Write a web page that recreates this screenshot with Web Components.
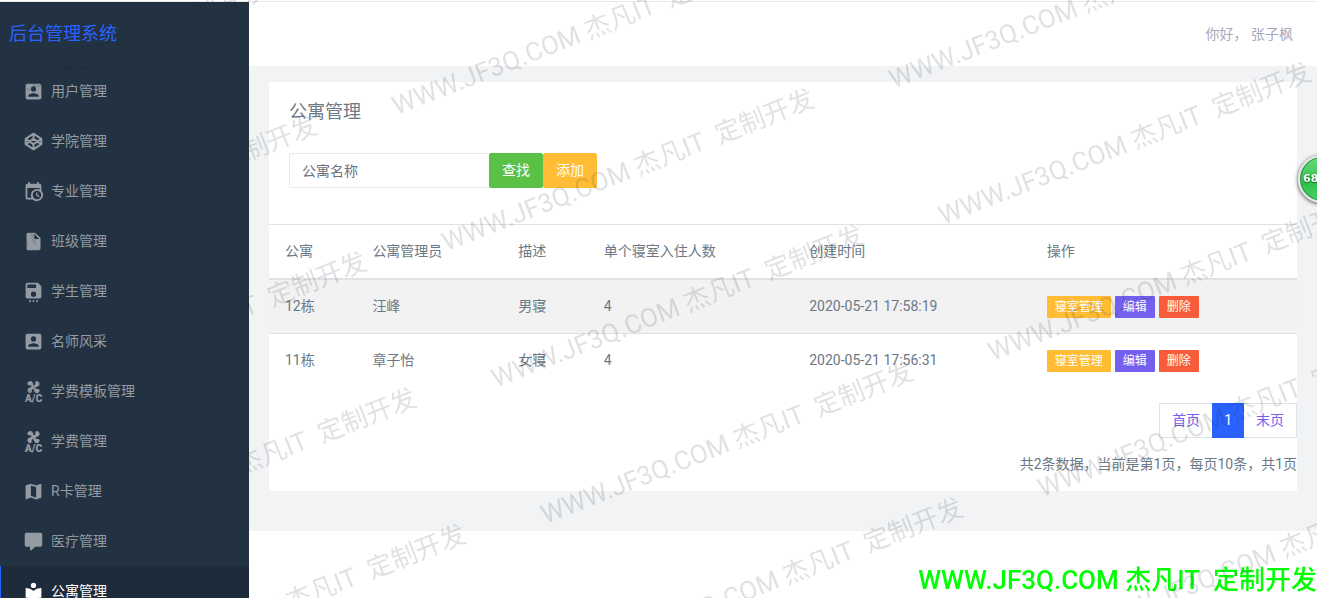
<!DOCTYPE html>
<html lang="zh-CN">
<head>
<meta charset="utf-8">
<meta name="viewport" content="width=device-width, initial-scale=1">
<title>后台管理系统</title>
<style>
  body {
    margin: 0;
    font-family: Roboto, "Noto Sans CJK SC", sans-serif;
    font-size: 14px;
    line-height: 21px;
    color: #6b7886;
    background: #fff;
  }
</style>
</head>
<body>
<admin-shell>
  <side-nav slot="side" brand="后台管理系统">
    <nav-item icon="account">用户管理</nav-item>
    <nav-item icon="codepen">学院管理</nav-item>
    <nav-item icon="calendar">专业管理</nav-item>
    <nav-item icon="file">班级管理</nav-item>
    <nav-item icon="save">学生管理</nav-item>
    <nav-item icon="account">名师风采</nav-item>
    <nav-item icon="fan">学费模板管理</nav-item>
    <nav-item icon="fan">学费管理</nav-item>
    <nav-item icon="map">R卡管理</nav-item>
    <nav-item icon="comment">医疗管理</nav-item>
    <nav-item icon="reader" active>公寓管理</nav-item>
  </side-nav>
  <top-bar slot="top">你好， 张子枫</top-bar>
  <panel-card>
    <span slot="title">公寓管理</span>
    <search-form slot="tools" placeholder="公寓名称"></search-form>
    <room-table></room-table>
    <page-nav slot="footer">共2条数据，当前是第1页，每页10条，共1页</page-nav>
  </panel-card>
</admin-shell>
<site-stamp>WWW.JF3Q.COM 杰凡IT&nbsp; 定制开发</site-stamp>
<speed-ball>68</speed-ball>
<water-mark text="WWW.JF3Q.COM 杰凡IT&nbsp; 定制开发"></water-mark>

<script>
const ICONS = {
  account: '<path d="M6,17C6,15 10,13.9 12,13.9C14,13.9 18,15 18,17V18H6M15,9A3,3 0 0,1 12,12A3,3 0 0,1 9,9A3,3 0 0,1 12,6A3,3 0 0,1 15,9M3,5V19A2,2 0 0,0 5,21H19A2,2 0 0,0 21,19V5A2,2 0 0,0 19,3H5C3.89,3 3,3.9 3,5Z"/>',
  codepen: '<path fill="none" stroke="currentColor" stroke-width="2.2" stroke-linejoin="round" d="M12,3L21,9V15L12,21L3,15V9ZM3,9L12,15L21,9M3,15L12,9L21,15M12,3V9M12,15V21"/>',
  calendar: '<path d="M15,13H16.5V15.82L18.94,17.23L18.19,18.53L15,16.69V13M19,8H5V19H9.67C9.24,18.09 9,17.07 9,16A7,7 0 0,1 16,9C17.07,9 18.09,9.24 19,9.67V8M5,21C3.89,21 3,20.1 3,19V5C3,3.89 3.89,3 5,3H6V1H8V3H16V1H18V3H19A2,2 0 0,1 21,5V11.1C22.24,12.36 23,14.09 23,16A7,7 0 0,1 16,23C14.09,23 12.36,22.24 11.1,21H5M16,11.15A4.85,4.85 0 0,0 11.15,16C11.15,18.68 13.32,20.85 16,20.85A4.85,4.85 0 0,0 20.85,16C20.85,13.32 18.68,11.15 16,11.15Z"/>',
  file: '<path d="M13,9V3.5L18.5,9M6,2C4.89,2 4,2.89 4,4V20A2,2 0 0,0 6,22H18A2,2 0 0,0 20,20V8L14,2H6Z"/>',
  save: '<path d="M15,8V4H5V8H15M12,18A3,3 0 0,0 15,15A3,3 0 0,0 12,12A3,3 0 0,0 9,15A3,3 0 0,0 12,18M17,2L21,6V18A2,2 0 0,1 19,20H5C3.89,20 3,19.1 3,18V4A2,2 0 0,1 5,2H17M11,22H13V24H11V22M7,22H9V24H7V22M15,22H17V24H15V22Z"/>',
  fan: '<path d="M6.59,0.66C8.93,-1.15 11.47,1.06 12.04,4.5C12.47,4.5 12.89,4.62 13.27,4.84C13.79,4.24 14.25,3.42 14.07,2.5C13.65,0.35 16.06,-1.39 18.35,1.58C20.16,3.92 17.95,6.46 14.5,7.03C14.5,7.46 14.39,7.89 14.16,8.27C14.76,8.78 15.58,9.24 16.5,9.06C18.63,8.64 20.38,11.04 17.41,13.34C15.07,15.15 12.53,12.94 11.96,9.5C11.53,9.5 11.11,9.37 10.74,9.15C10.22,9.75 9.75,10.58 9.93,11.5C10.35,13.64 7.94,15.39 5.65,12.42C3.83,10.07 6.05,7.53 9.5,6.97C9.5,6.54 9.63,6.12 9.85,5.74C9.25,5.23 8.43,4.76 7.5,4.94C5.37,5.36 3.62,2.96 6.59,0.66Z"/><text x="12" y="24" text-anchor="middle" font-family="Roboto, sans-serif" font-weight="900" font-size="12">A/C</text>',
  map: '<path d="M15,19L9,16.89V5L15,7.11M20.5,3C20.44,3 20.39,3 20.34,3L15,5.1L9,3L3.36,4.9C3.15,4.97 3,5.15 3,5.38V20.5A0.5,0.5 0 0,0 3.5,21C3.55,21 3.61,21 3.66,20.97L9,18.9L15,21L20.64,19.1C20.85,19 21,18.85 21,18.62V3.5A0.5,0.5 0 0,0 20.5,3Z"/>',
  comment: '<path d="M9,22A1,1 0 0,1 8,21V18H4A2,2 0 0,1 2,16V4C2,2.89 2.9,2 4,2H20A2,2 0 0,1 22,4V16A2,2 0 0,1 20,18H13.9L10.2,21.71C10,21.9 9.75,22 9.5,22H9Z"/>',
  reader: '<path d="M12,8A3,3 0 0,0 15,5A3,3 0 0,0 12,2A3,3 0 0,0 9,5A3,3 0 0,0 12,8M12,11.54C9.64,9.35 6.5,8 3,8V19C6.5,19 9.64,20.35 12,22.54C14.36,20.35 17.5,19 21,19V8C17.5,8 14.36,9.35 12,11.54Z"/>'
};

const ROOMS = [
  { name: '12栋', manager: '汪峰', desc: '男寝', size: 4, created: '2020-05-21 17:58:19' },
  { name: '11栋', manager: '章子怡', desc: '女寝', size: 4, created: '2020-05-21 17:56:31' }
];

/** Base: renders template() into an open shadow root. */
class BaseElement extends HTMLElement {
  constructor() {
    super();
    this.attachShadow({ mode: 'open' });
    const tpl = document.createElement('template');
    tpl.innerHTML = this.template();
    this.shadowRoot.appendChild(tpl.content.cloneNode(true));
  }
}

class AdminShell extends BaseElement {
  template() {
    return `
      <style>
        :host {
          display: grid;
          grid-template-columns: 249px minmax(0, 1fr);
          box-sizing: border-box;
          height: 100vh;
          overflow: hidden;
          padding-top: 2px;
          background: linear-gradient(#fff 1px, #e6e8ea 1px, #e6e8ea 2px, #fff 2px);
        }
        main { background: #f2f3f5; padding: 16px 20px 40px; }
      </style>
      <slot name="side"></slot>
      <div>
        <slot name="top"></slot>
        <main><slot></slot></main>
      </div>`;
  }
}

class SideNav extends BaseElement {
  template() {
    return `
      <style>
        :host { display: block; background: #233242; overflow: hidden; }
        .brand {
          display: flex;
          align-items: center;
          box-sizing: border-box;
          height: 64px;
          padding: 0 0 2px 9px;
          font-size: 18px;
          color: #2962ff;
          text-decoration: none;
          box-shadow: 0 1px 4px rgba(0,0,0,0.12);
        }
      </style>
      <a class="brand" href="#">${this.getAttribute('brand')}</a>
      <nav><slot></slot></nav>`;
  }
}

class NavItem extends BaseElement {
  template() {
    return `
      <style>
        :host { display: block; }
        a {
          display: flex;
          align-items: center;
          gap: 7px;
          height: 50px;
          padding-left: 23px;
          color: #949ba3;
          text-decoration: none;
        }
        svg { width: 21px; height: 21px; fill: currentColor; overflow: visible; }
        :host([active]) a {
          color: #fff;
          background: #1e2b3a;
          box-shadow: inset 1px 0 #2962ff;
        }
      </style>
      <a href="#">
        <svg viewBox="0 0 24 24" aria-hidden="true">${ICONS[this.getAttribute('icon')]}</svg>
        <span><slot></slot></span>
      </a>`;
  }
}

class TopBar extends BaseElement {
  template() {
    return `
      <style>
        :host {
          display: flex;
          align-items: center;
          justify-content: flex-end;
          height: 64px;
          padding: 0 24px;
          background: #fff;
        }
        a { color: #a6aab8; text-decoration: none; }
      </style>
      <a href="#"><slot></slot></a>`;
  }
}

class PanelCard extends BaseElement {
  template() {
    return `
      <style>
        :host { display: block; background: #fff; }
        .head { padding: 16px 20px 36px; }
        h4 {
          margin: 0 0 28px;
          font-size: 18px;
          line-height: 27px;
          font-weight: 400;
        }
      </style>
      <div class="head">
        <h4><slot name="title"></slot></h4>
        <slot name="tools"></slot>
      </div>
      <slot></slot>
      <slot name="footer"></slot>`;
  }
}

class SearchForm extends BaseElement {
  template() {
    const hint = this.getAttribute('placeholder');
    return `
      <style>
        :host { display: block; }
        form { display: flex; }
        input, button { font: inherit; box-sizing: border-box; height: 35px; padding: 0 12px; }
        input {
          width: 200px;
          border: 1px solid #e9ecef;
          border-right: 0;
          outline: 0;
          color: #4f5467;
        }
        input::placeholder { color: #6a7380; opacity: 1; }
        button { width: 54px; border: 1px solid; border-radius: 2px; color: #fff; }
        .find { background: #5ac146; border-color: #5ac146; }
        .add { background: #ffbc34; border-color: #ffbc34; }
      </style>
      <form>
        <input type="text" name="name" aria-label="${hint}" placeholder="${hint}">
        <button class="find" type="button">查找</button>
        <button class="add" type="button">添加</button>
      </form>`;
  }
}

class RoomTable extends BaseElement {
  template() {
    const rows = ROOMS.map(r => `
      <tr>
        <td>${r.name}</td><td>${r.manager}</td><td>${r.desc}</td><td>${r.size}</td><td>${r.created}</td>
        <td>
          <div class="ops">
            <button class="warning" type="button">寝室管理</button>
            <button class="primary" type="button">编辑</button>
            <button class="danger" type="button">删除</button>
          </div>
        </td>
      </tr>`).join('');
    return `
      <style>
        :host { display: block; }
        table { width: 100%; table-layout: fixed; border-spacing: 0; }
        th, td {
          padding: 16px;
          border-top: 1px solid #dee2e6;
          text-align: left;
          font-weight: 400;
          white-space: nowrap;
        }
        th { border-bottom: 2px solid #dee2e6; }
        tbody tr:first-child td { border-top: 0; }
        tbody tr:nth-child(odd) { background: #f2f2f2; }
        .ops { display: flex; gap: 4px; align-items: center; height: 21px; }
        button {
          height: 22px;
          padding: 0 8px;
          border: 0;
          border-radius: 1px;
          font: inherit;
          font-size: 12px;
          line-height: 22px;
          color: #fff;
        }
        .warning { background: #ffbc34; }
        .primary { background: #7460ee; }
        .danger { background: #f95c3a; }
      </style>
      <table>
        <colgroup>
          <col style="width: 8.5%"><col style="width: 14.2%"><col style="width: 8.3%">
          <col style="width: 20%"><col style="width: 23.1%"><col>
        </colgroup>
        <thead>
          <tr><th>公寓</th><th>公寓管理员</th><th>描述</th><th>单个寝室入住人数</th><th>创建时间</th><th>操作</th></tr>
        </thead>
        <tbody>${rows}</tbody>
      </table>`;
  }
}

class PageNav extends BaseElement {
  template() {
    return `
      <style>
        :host {
          display: flex;
          flex-direction: column;
          align-items: flex-end;
          gap: 16px;
          padding: 16px 0;
        }
        nav { display: flex; }
        a {
          padding: 6px 12px;
          border: 1px solid #dee2e6;
          color: #7460ee;
          text-decoration: none;
        }
        a:first-child { border-right: 0; }
        a:last-child { border-left: 0; }
        a.on {
          border-width: 1px 0;
          border-color: #2962ff;
          background: #2962ff;
          color: #fff;
        }
        p { margin: 0; }
      </style>
      <nav aria-label="分页">
        <a href="#">首页</a>
        <a href="#" class="on" aria-current="page">1</a>
        <a href="#">末页</a>
      </nav>
      <p><slot></slot></p>`;
  }
}

/** Fixed text in the lower right corner. */
class SiteStamp extends BaseElement {
  template() {
    return `
      <style>
        :host {
          position: fixed;
          right: 0;
          bottom: 0;
          font: 500 26px/36px Roboto, "Noto Sans CJK SC", sans-serif;
          color: #0f0;
          white-space: nowrap;
        }
      </style>
      <slot></slot>`;
  }
}

class SpeedBall extends BaseElement {
  template() {
    return `
      <style>
        :host {
          position: fixed;
          top: 155px;
          right: -29px;
          box-sizing: border-box;
          width: 48px;
          height: 48px;
          padding-left: 3px;
          border: 2px solid #e4e6e6;
          border-radius: 50%;
          background: linear-gradient(#6fdc7c, #2fc04c 55%, #46d060);
          box-shadow: inset 0 0 0 1px #2a8a45, 0 1px 4px rgba(0,0,0,0.7);
          font: 700 11px/44px "DejaVu Sans", sans-serif;
          color: #fff;
          text-shadow: 0 1px 1px #1c6a30, 0 0 1px #1c6a30;
        }
      </style>
      <slot></slot>`;
  }
}

/** Slanted text repeated over the whole window; each line leans a little more than the grid. */
class WaterMark extends BaseElement {
  template() {
    const cells = `<span>${this.getAttribute('text')}</span>`.repeat(27);
    return `
      <style>
        :host {
          position: fixed;
          inset: 0;
          overflow: hidden;
          pointer-events: none;
          font: 26px/30px Roboto, "Noto Sans CJK SC", sans-serif;
          color: rgba(28,40,52,0.14);
        }
        div {
          position: absolute;
          left: -158px;
          top: -17px;
          display: grid;
          grid-template-columns: repeat(3, 476px);
          grid-auto-rows: 145px;
          align-items: start;
          transform: rotate(-20deg);
          transform-origin: 0 0;
          white-space: nowrap;
        }
        span { transform: rotate(-1.5deg); transform-origin: 0 100%; }
      </style>
      <div aria-hidden="true">${cells}</div>`;
  }
}

customElements.define('admin-shell', AdminShell);
customElements.define('side-nav', SideNav);
customElements.define('nav-item', NavItem);
customElements.define('top-bar', TopBar);
customElements.define('panel-card', PanelCard);
customElements.define('search-form', SearchForm);
customElements.define('room-table', RoomTable);
customElements.define('page-nav', PageNav);
customElements.define('site-stamp', SiteStamp);
customElements.define('speed-ball', SpeedBall);
customElements.define('water-mark', WaterMark);
</script>
</body>
</html>
